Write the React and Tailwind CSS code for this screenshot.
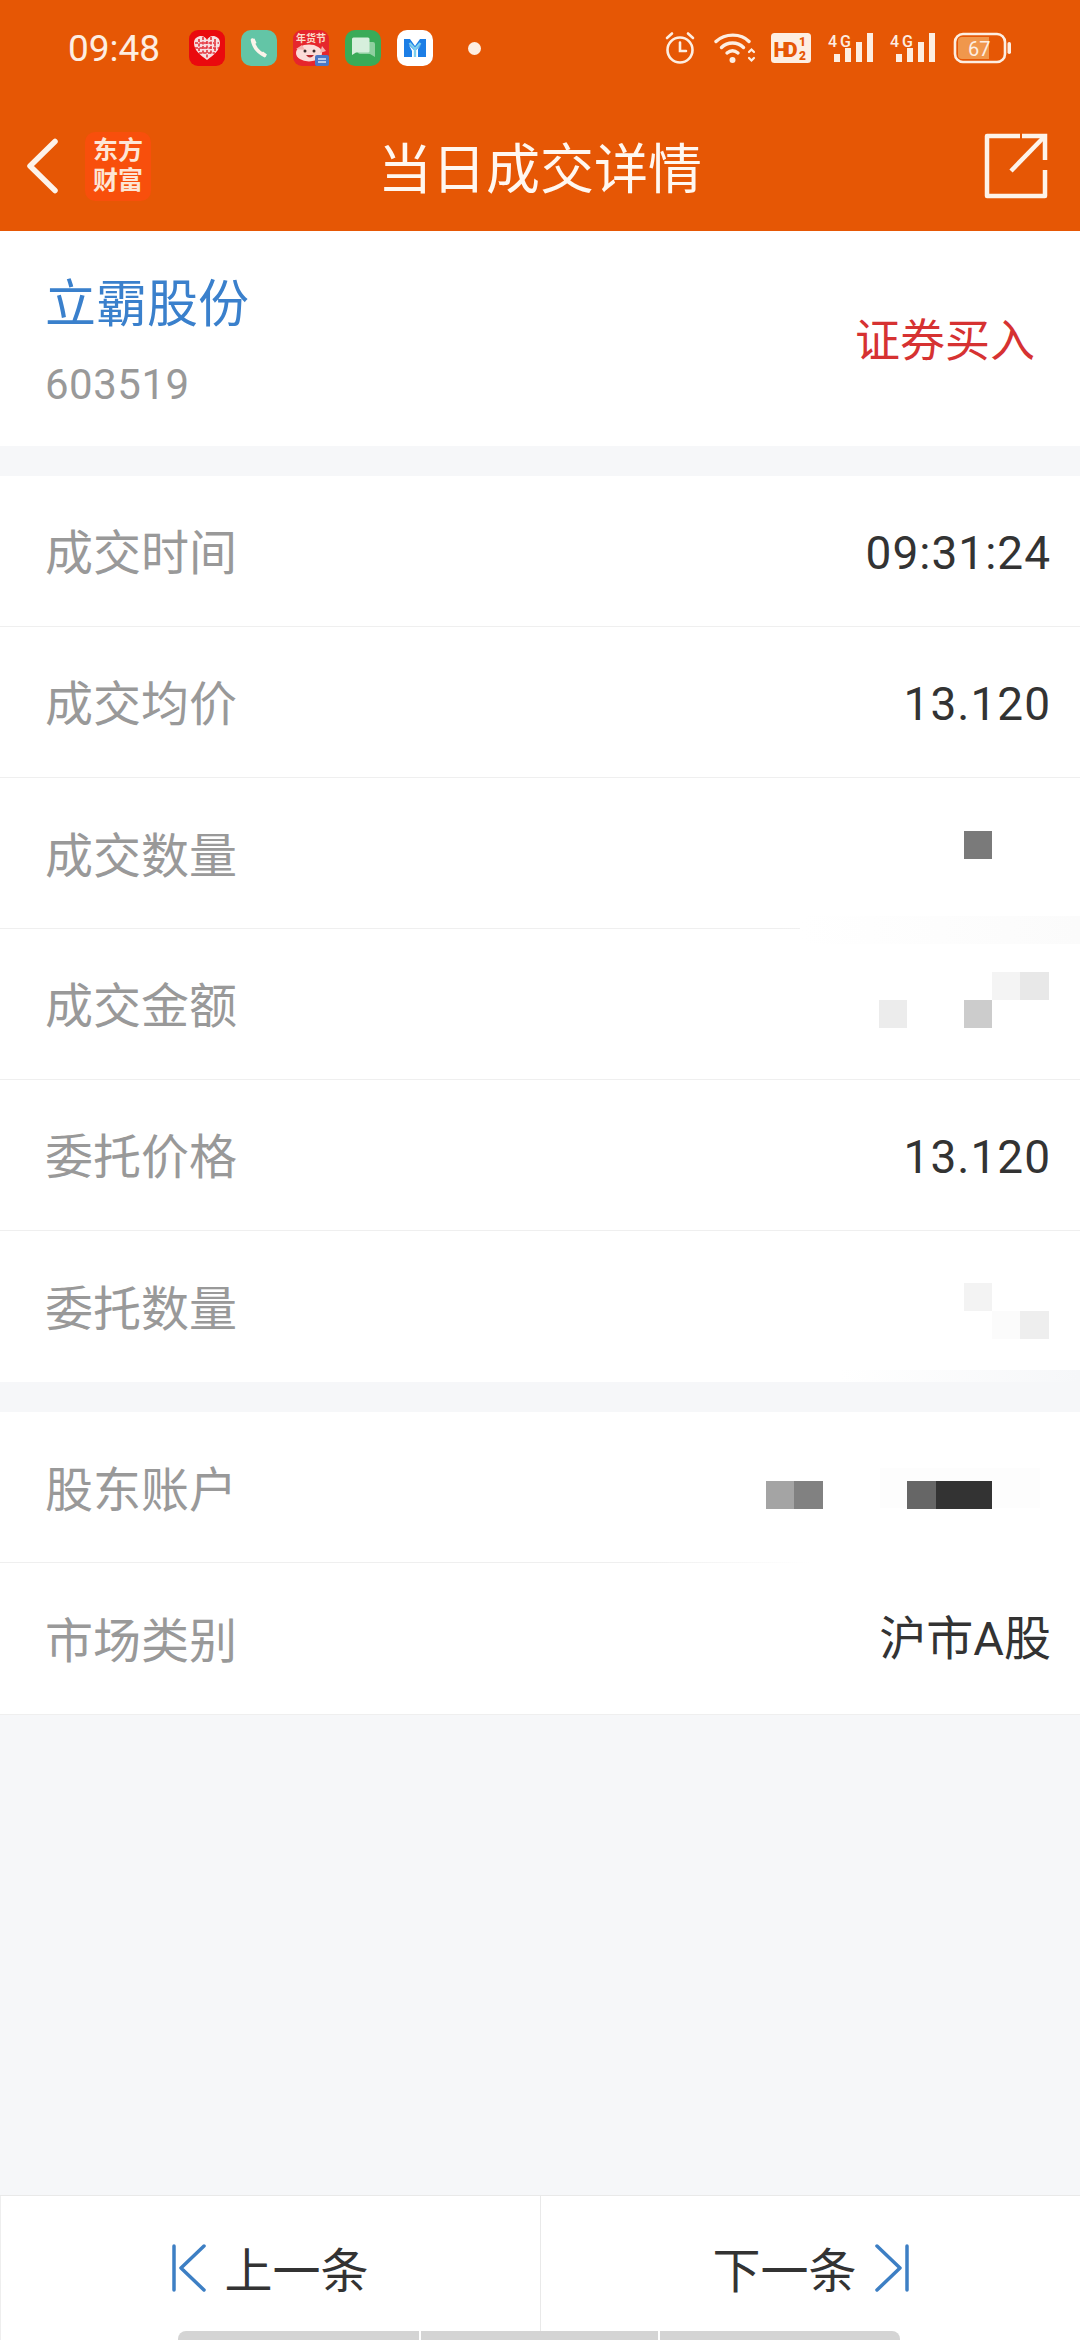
import React from "react";

const SANS = "font-['Roboto','Noto_Sans_CJK_SC',sans-serif]";
const STATUS = "#fdeee2";

function PddIcon() {
  return (
    <svg width="36" height="36" viewBox="0 0 36 36">
      <rect width="36" height="36" rx="9" fill="#ea0a0e" />
      <path d="M18 30 C11 25 5 20 5 13 C5 8 9 6 12 6 C15 6 17 8 18 10 C19 8 21 6 24 6 C27 6 31 8 31 13 C31 20 25 25 18 30Z" fill="#f7dfe0" />
      <g stroke="#e3323a" strokeWidth="1.6" fill="none" strokeDasharray="3 1.500">
        <path d="M10 9v12M14 7v18M22 7v18M26 9v12M18 11v18" />
        <path d="M6 13h24M6 18h24M10 23h16" />
      </g>
    </svg>
  );
}

function PhoneIcon() {
  return (
    <svg width="36" height="36" viewBox="0 0 36 36">
      <rect width="36" height="36" rx="10" fill="#63c5a6" />
      <path d="M11.500 10 C12.500 16 16.500 22 23.500 25.500" stroke="#fbf3ea" strokeWidth="3.600" strokeLinecap="round" fill="none" />
      <path d="M11 9.500l2.500-1 2 4.500-2.500 1.500zM20 23.500l2-2 4 3-2 2z" fill="#fbf3ea" />
    </svg>
  );
}

function FestivalIcon() {
  return (
    <svg width="36" height="36" viewBox="0 0 36 36">
      <rect width="36" height="36" rx="9" fill="#e6262c" />
      <text x="3" y="12" fontFamily="'Noto Sans CJK SC', sans-serif" fontWeight="700" fontSize="10" fill="#fbdcc8">年货节</text>
      <ellipse cx="16" cy="23" rx="13" ry="8.500" fill="#fbdcd8" />
      <path d="M3 19l6-4 3 5zM29 16l4 5-6 2z" fill="#f5b3ae" />
      <circle cx="12" cy="21" r="1.500" fill="#3a2a2a" />
      <circle cx="21" cy="21" r="1.500" fill="#3a2a2a" />
      <path d="M13 25q4 5 8 0z" fill="#b5272c" />
      <rect x="22" y="25" width="14" height="11" rx="2" fill="#4a78c6" />
      <path d="M25 29h8M25 32h8" stroke="#dfe8f8" strokeWidth="1.300" />
    </svg>
  );
}

function ChatIcon() {
  return (
    <svg width="36" height="36" viewBox="0 0 36 36">
      <rect width="36" height="36" rx="10" fill="#39ab58" />
      <path d="M13 12h15a2 2 0 0 1 2 2v13l-5-3H15a2 2 0 0 1-2-2z" fill="#8fd0a0" />
      <path d="M7 9a1.500 1.500 0 0 1 1.500-1.500H23A1.500 1.500 0 0 1 24.500 9v12a1.500 1.500 0 0 1-1.500 1.500H11L7 25z" fill="#d6efdc" />
    </svg>
  );
}

function MIcon() {
  return (
    <svg width="36" height="36" viewBox="0 0 36 36">
      <rect width="36" height="36" rx="10" fill="#ffffff" />
      <path d="M7 9h6l5 7 5-7h6v18h-8v-8l3-4-6 6-6-6 3 6v6H7z" fill="#1b7ee6" />
      <path d="M12.500 13l5.500 6 5.500-6M18 19v8" stroke="#7fd0ee" strokeWidth="2.400" fill="none" />
    </svg>
  );
}

function AlarmIcon() {
  return (
    <svg width="30" height="34" viewBox="0 0 30 34" fill="none" stroke={STATUS} strokeWidth="2.600">
      <circle cx="15" cy="19" r="12.500" />
      <path d="M15 11.500V20h6" strokeLinecap="round" />
      <path d="M2 7l5-4.500M28 7l-5-4.500" strokeLinecap="round" />
    </svg>
  );
}

function WifiIcon() {
  return (
    <svg width="42" height="32" viewBox="0 0 42 32" fill="none" stroke={STATUS} strokeLinecap="round">
      <path d="M2 9.500C11 1 27 1 35 9.500" strokeWidth="3.400" />
      <path d="M7.500 15.500C13.500 9.500 23.500 9.500 29.500 15.500" strokeWidth="3.400" />
      <path d="M13 21c3.500-3 7.500-3 11 0" strokeWidth="3.400" />
      <circle cx="18.500" cy="28" r="3" fill={STATUS} stroke="none" />
      <path d="M35 20l2.500-2.500L40 20M35 26l2.500 2.500L40 26" strokeWidth="2.200" />
    </svg>
  );
}

function HdIcon() {
  return (
    <svg width="40" height="30" viewBox="0 0 40 30">
      <rect width="40" height="30" rx="3.500" fill={STATUS} />
      <text x="2.500" y="23.500" fontFamily="Roboto, sans-serif" fontWeight="900" fontSize="21" fill="#e65705" textLength="24">HD</text>
      <text x="28" y="12.500" fontFamily="Roboto, sans-serif" fontWeight="900" fontSize="12" fill="#e65705">1</text>
      <text x="28" y="27" fontFamily="Roboto, sans-serif" fontWeight="900" fontSize="12" fill="#e65705">2</text>
    </svg>
  );
}

function SignalIcon() {
  return (
    <svg width="46" height="30" viewBox="0 0 46 30" className="overflow-visible">
      <text x="0" y="14" fontFamily="Roboto, sans-serif" fontWeight="500" fontSize="16" fill={STATUS} textLength="23">4G</text>
      <g fill={STATUS}>
        <rect x="6" y="21" width="6" height="8" />
        <rect x="17" y="15" width="6" height="14" />
        <rect x="28" y="9" width="6" height="20" />
        <rect x="39" y="0" width="6" height="29" />
      </g>
    </svg>
  );
}

function BatteryIcon() {
  return (
    <svg width="58" height="32" viewBox="0 0 58 32">
      <rect x="2" y="2" width="50" height="28" rx="8" fill="none" stroke={STATUS} strokeWidth="2.600" />
      <path d="M5 9a4 4 0 0 1 4-4h27v22H9a4 4 0 0 1-4-4z" fill="#f0974c" />
      <text x="15" y="24" fontFamily="Roboto, sans-serif" fontSize="20" fill={STATUS}>67</text>
      <rect x="54.500" y="10" width="3.500" height="12" rx="1.700" fill={STATUS} />
    </svg>
  );
}

function StatusBar() {
  return (
    <div className={`h-[98px] flex items-center justify-between pb-[2px] pl-[68px] pr-[69px] ${SANS}`}>
      <div className="flex items-center">
        <span className="text-[37px] leading-none text-[#fdeee2] w-[121px] font-normal">09:48</span>
        <div className="flex items-center gap-[16px]">
          <PddIcon />
          <PhoneIcon />
          <FestivalIcon />
          <ChatIcon />
          <MIcon />
        </div>
        <span className="ml-[35px] w-[13px] h-[13px] rounded-full bg-[#fdeee2]" />
      </div>
      <div className="flex items-center">
        <AlarmIcon />
        <div className="ml-[19px]"><WifiIcon /></div>
        <div className="ml-[15px]"><HdIcon /></div>
        <div className="ml-[17px]"><SignalIcon /></div>
        <div className="ml-[16px]"><SignalIcon /></div>
        <div className="ml-[17px]"><BatteryIcon /></div>
      </div>
    </div>
  );
}

function NavBar() {
  return (
    <div className="h-[133px] grid grid-cols-[1fr_auto_1fr] items-center pt-[3px]">
      <div className="flex items-center pl-[26px] gap-[26px]">
        <svg width="33" height="56" viewBox="0 0 33 56" fill="none">
          <path d="M29 3.500L4 28l25 24.500" stroke="#fdf3ea" strokeWidth="5.500" strokeLinecap="round" strokeLinejoin="round" />
        </svg>
        <div className="w-[66px] h-[69px] rounded-[10px] bg-[#f84f0c] flex flex-col items-center justify-center font-['Liberation_Serif','Noto_Sans_CJK_SC',serif] font-bold text-[25px] leading-[30px] text-[#fde6d6]">
          <span>东方</span>
          <span>财富</span>
        </div>
      </div>
      <div className="font-['Noto_Sans_CJK_SC',sans-serif] text-[54px] leading-none text-[#fff7f0]">当日成交详情</div>
      <div className="flex justify-end pr-[32px]">
        <svg width="64" height="66" viewBox="0 0 64 66" fill="none" stroke="#fdf3ea" strokeWidth="4.500">
          <path d="M36 3H3v60h58V37" strokeLinejoin="round" />
          <path d="M61 27V3H38" />
          <path d="M61 3L27 38" />
        </svg>
      </div>
    </div>
  );
}

function Row({ label, value, divider = "border-b border-[#efefef]", children }) {
  return (
    <div className={`relative h-[151px] shrink-0 flex items-center justify-between pl-[45px] pr-[29px] ${divider}`}>
      <span className="font-['Noto_Sans_CJK_SC',sans-serif] text-[48px] leading-none text-[#999999] mb-[4px]">{label}</span>
      {value ? (
        <span className={`${SANS} text-[46px] leading-none text-[#333333] tracking-[1px] mt-[3px]`}>{value}</span>
      ) : null}
      {children}
    </div>
  );
}

function Cell({ className }) {
  return <div className={`absolute h-[28px] ${className}`} />;
}

function PrevIcon() {
  return (
    <svg width="34" height="48" viewBox="0 0 34 48" fill="none" stroke="#3d7fc4" strokeWidth="3.500" strokeLinecap="round" strokeLinejoin="round">
      <path d="M2 2v44" />
      <path d="M32 2L9 24l23 22" />
    </svg>
  );
}

function NextIcon() {
  return (
    <svg width="34" height="48" viewBox="0 0 34 48" fill="none" stroke="#3d7fc4" strokeWidth="3.500" strokeLinecap="round" strokeLinejoin="round">
      <path d="M32 2v44" />
      <path d="M2 2l23 22L2 46" />
    </svg>
  );
}

export default function App() {
  return (
    <div className="relative w-[1080px] h-[2340px] flex flex-col bg-[#f6f7f9] overflow-hidden">
      <div className="bg-[#e65705] shrink-0 h-[231px]">
        <StatusBar />
        <NavBar />
      </div>

      <div className="bg-white h-[215px] shrink-0 flex items-center justify-between pl-[45px] pr-[45px]">
        <div className="flex flex-col pt-[3px]">
          <span className="font-['Noto_Sans_CJK_SC',sans-serif] text-[51px] leading-none text-[#3a80cc]">立霸股份</span>
          <span className={`${SANS} text-[42px] leading-none tracking-[0.5px] text-[#999999] mt-[38px]`}>603519</span>
        </div>
        <span className="font-['Noto_Sans_CJK_SC',sans-serif] text-[45px] leading-none text-[#d63232] mb-[2px]">证券买入</span>
      </div>

      <div className="mt-[30px] bg-white shrink-0">
        <Row label="成交时间" value="09:31:24" />
        <Row label="成交均价" value="13.120" />
        <Row label="成交数量" divider="">
          <Cell className="left-[964px] top-[53px] w-[28px] bg-[#7a7a7a]" />
          <div className="absolute left-0 right-0 bottom-0 h-px bg-gradient-to-r from-[#efefef] from-[72%] to-[#fafafa]" />
          <div className="absolute right-0 bottom-[-15px] w-[280px] h-[28px] bg-gradient-to-r from-white to-[#fbfbfb] z-10" />
        </Row>
        <Row label="成交金额">
          <Cell className="left-[992px] top-[43px] w-[28px] bg-[#f4f4f4]" />
          <Cell className="left-[1020px] top-[43px] w-[29px] bg-[#e8e8e8]" />
          <Cell className="left-[879px] top-[71px] w-[28px] bg-[#ececec]" />
          <Cell className="left-[964px] top-[71px] w-[28px] bg-[#cccccc]" />
        </Row>
        <Row label="委托价格" value="13.120" />
        <Row label="委托数量" divider="">
          <Cell className="left-[964px] top-[52px] w-[28px] bg-[#f3f3f3]" />
          <Cell className="left-[992px] top-[80px] w-[28px] bg-[#fbfbfb]" />
          <Cell className="left-[1020px] top-[80px] w-[29px] bg-[#eeeeee]" />
          <div className="absolute right-0 bottom-0 w-[240px] h-[12px] bg-gradient-to-r from-white to-[#f6f7f9]" />
        </Row>
      </div>

      <div className="mt-[30px] bg-white shrink-0 border-b border-[#efefef]">
        <Row label="股东账户" divider="">
          <div className="absolute left-[880px] top-[56px] w-[160px] h-[40px] bg-[#fdfdfd]" />
          <Cell className="left-[766px] top-[69px] w-[28px] bg-[#a4a4a4]" />
          <Cell className="left-[794px] top-[69px] w-[29px] bg-[#818181]" />
          <Cell className="left-[907px] top-[69px] w-[29px] bg-[#666666]" />
          <Cell className="left-[936px] top-[69px] w-[56px] bg-[#333333]" />
          <div className="absolute left-0 right-0 bottom-0 h-px bg-gradient-to-r from-[#efefef] from-[60%] to-white to-[75%]" />
        </Row>
        <Row label="市场类别" divider="">
          <span className="font-['Roboto','Noto_Sans_CJK_SC',sans-serif] text-[47px] leading-none text-[#333333]">沪市A股</span>
        </Row>
      </div>

      <div className="flex-1" />

      <div className="h-[145px] shrink-0 bg-white border-t border-[#e9e9e9] grid grid-cols-2 font-['Noto_Sans_CJK_SC',sans-serif] text-[48px] leading-none text-[#333333]">
        <div className="flex items-center justify-center gap-[18px] border-l border-[#eeeeee]">
          <PrevIcon />
          <span className="mb-[2px]">上一条</span>
        </div>
        <div className="flex items-center justify-center gap-[18px] border-l border-[#e9e9e9]">
          <span className="mb-[2px]">下一条</span>
          <NextIcon />
        </div>
      </div>

      <div className="absolute bottom-0 left-[178px] w-[722px] h-[9px] flex gap-[2px]">
        <div className="flex-1 bg-[#d4d4d4] rounded-tl-[8px]" />
        <div className="w-[237px] bg-[#d4d4d4]" />
        <div className="flex-1 bg-[#d4d4d4] rounded-tr-[8px]" />
      </div>
    </div>
  );
}
